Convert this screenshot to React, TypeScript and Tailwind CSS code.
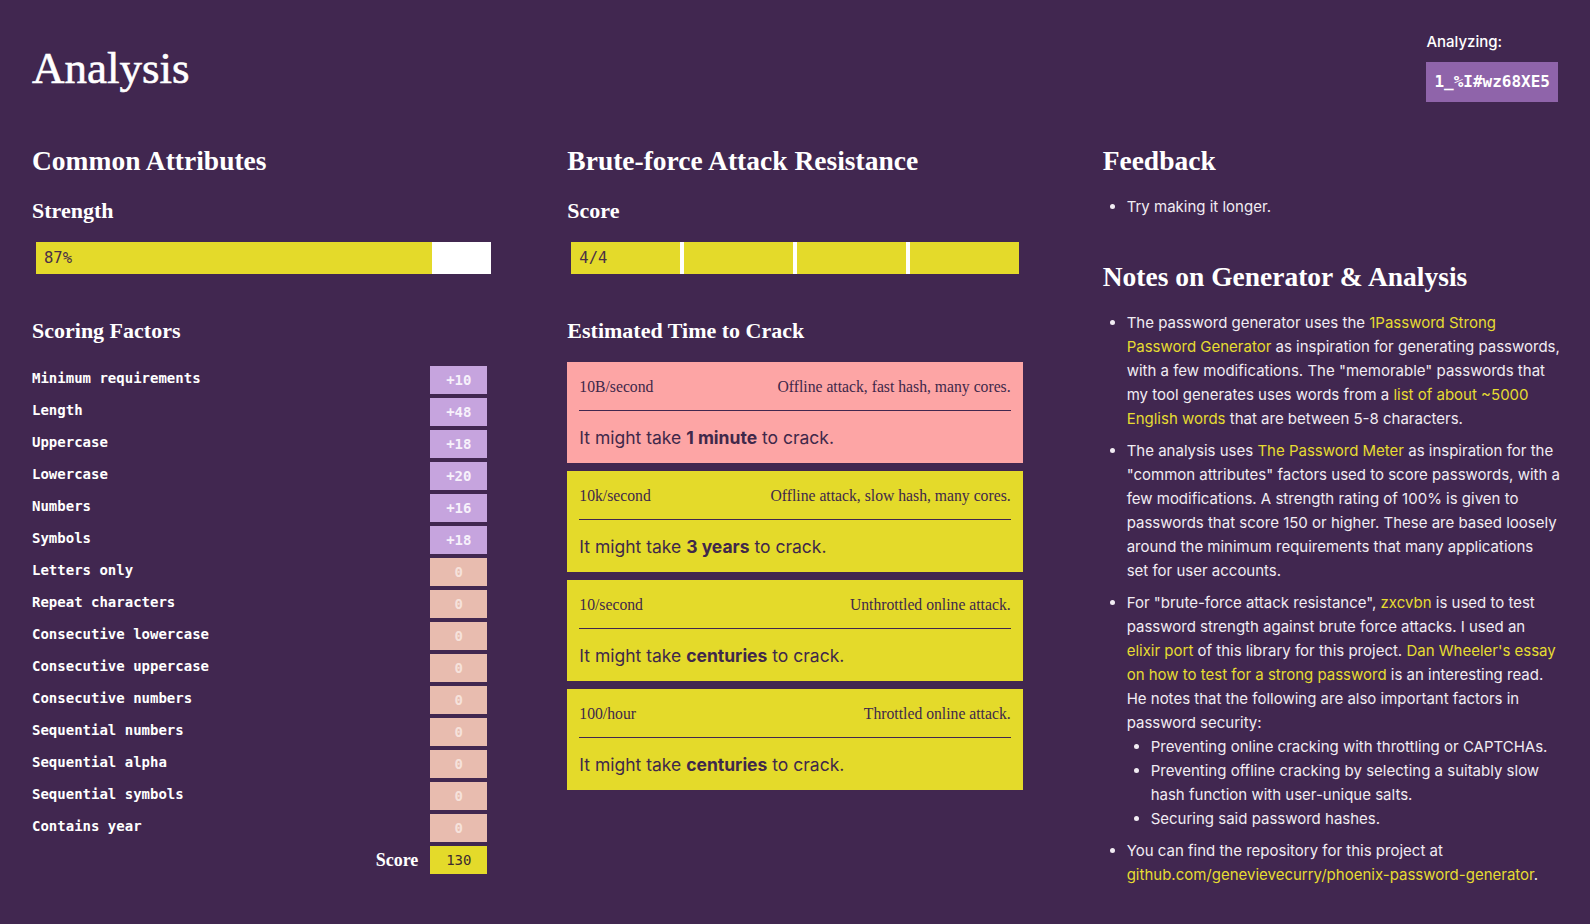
import React from "react";

const factors: [string, string][] = [
  ["Minimum requirements", "+10"],
  ["Length", "+48"],
  ["Uppercase", "+18"],
  ["Lowercase", "+20"],
  ["Numbers", "+16"],
  ["Symbols", "+18"],
  ["Letters only", "0"],
  ["Repeat characters", "0"],
  ["Consecutive lowercase", "0"],
  ["Consecutive uppercase", "0"],
  ["Consecutive numbers", "0"],
  ["Sequential numbers", "0"],
  ["Sequential alpha", "0"],
  ["Sequential symbols", "0"],
  ["Contains year", "0"],
];

const cards = [
  { rate: "10B/second", desc: "Offline attack, fast hash, many cores.", time: "1 minute", pink: true },
  { rate: "10k/second", desc: "Offline attack, slow hash, many cores.", time: "3 years", pink: false },
  { rate: "10/second", desc: "Unthrottled online attack.", time: "centuries", pink: false },
  { rate: "100/hour", desc: "Throttled online attack.", time: "centuries", pink: false },
];

function A({ children }: { children: React.ReactNode }) {
  return <a className="text-[#e6dc32]">{children}</a>;
}

export default function App() {
  return (
    <div className="min-h-screen bg-[#412750] px-8 pt-8 pb-8 text-white">
      {/* Header */}
      <div className="flex items-start justify-between">
        <h1 className="mt-[10px] font-['Liberation_Serif',serif] text-[45px] leading-[52px] text-white [-webkit-text-stroke:0.6px_white]">
          Analysis
        </h1>
        <div className="flex flex-col items-start">
          <div className="font-['Inter',sans-serif] text-[15px] font-medium leading-5 text-white">
            Analyzing:
          </div>
          <div className="mt-[10px] flex h-10 items-center bg-[#8f64aa] px-2 font-['DejaVu_Sans_Mono',monospace] text-[16px] font-bold text-white">
            1_%I#wz68XE5
          </div>
        </div>
      </div>

      {/* Columns */}
      <div className="mt-[41px] grid grid-cols-3 gap-x-20">
        {/* Column 1 */}
        <div>
          <h2 className="font-['Liberation_Serif',serif] text-[27.5px] font-bold leading-9">
            Common Attributes
          </h2>
          <h3 className="mt-[17px] font-['Liberation_Serif',serif] text-[22px] font-bold leading-[30px]">
            Strength
          </h3>
          <div className="mt-4 ml-1 -mr-1 flex h-8 bg-white">
            <div className="flex h-full w-[87%] items-center bg-[#e4da2a] pl-2 pt-0.5 font-['DejaVu_Sans_Mono',monospace] text-[15.5px] text-[#4a3046]">
              87%
            </div>
          </div>
          <h3 className="mt-[42px] font-['Liberation_Serif',serif] text-[22px] font-bold leading-[30px]">
            Scoring Factors
          </h3>
          <div className="mt-5 flex flex-col gap-1">
            {factors.map(([label, val]) => {
              const pos = val !== "0";
              return (
                <div key={label} className="flex h-7 items-center justify-between">
                  <span className="pb-[3px] font-['DejaVu_Sans_Mono',monospace] text-[14px] font-bold text-white">
                    {label}
                  </span>
                  <span
                    className={
                      pos
                        ? "flex h-7 w-[57px] items-center justify-center bg-[#c6a4de] font-['DejaVu_Sans_Mono',monospace] text-[14px] font-bold text-[#f7f1fb]"
                        : "flex h-7 w-[57px] items-center justify-center bg-[#e8bcaf] font-['DejaVu_Sans_Mono',monospace] text-[14px] font-bold text-[#f6e2db]"
                    }
                  >
                    {val}
                  </span>
                </div>
              );
            })}
            <div className="flex h-7 items-center justify-end gap-3">
              <span className="font-['Liberation_Serif',serif] text-[18px] font-bold text-white">Score</span>
              <span className="flex h-7 w-[57px] items-center justify-center bg-[#e4da2a] font-['DejaVu_Sans_Mono',monospace] text-[14px] text-[#3d2a30]">
                130
              </span>
            </div>
          </div>
        </div>

        {/* Column 2 */}
        <div>
          <h2 className="font-['Liberation_Serif',serif] text-[27.5px] font-bold leading-9">
            Brute-force Attack Resistance
          </h2>
          <h3 className="mt-[17px] font-['Liberation_Serif',serif] text-[22px] font-bold leading-[30px]">
            Score
          </h3>
          <div className="mt-4 ml-1 mr-1 grid h-8 grid-cols-4 gap-1 bg-white">
            <div className="flex items-center bg-[#e4da2a] pl-2 pt-0.5 font-['DejaVu_Sans_Mono',monospace] text-[15.5px] text-[#4a3046]">
              4/4
            </div>
            <div className="bg-[#e4da2a]" />
            <div className="bg-[#e4da2a]" />
            <div className="bg-[#e4da2a]" />
          </div>
          <h3 className="mt-[42px] font-['Liberation_Serif',serif] text-[22px] font-bold leading-[30px]">
            Estimated Time to Crack
          </h3>
          <div className="mt-4 flex flex-col gap-2">
            {cards.map((c) => (
              <div
                key={c.rate}
                className={
                  c.pink
                    ? "bg-[#fda5a5] px-3 pt-[14px] pb-[11px] text-[#40284a]"
                    : "bg-[#e4da2a] px-3 pt-[14px] pb-[11px] text-[#40284a]"
                }
              >
                <div className="flex justify-between font-['Liberation_Serif',serif] text-[15.7px] leading-[22px]">
                  <span>{c.rate}</span>
                  <span>{c.desc}</span>
                </div>
                <div className="mt-3 h-px bg-[#41274f]" />
                <p className="mt-[13px] font-['Inter',sans-serif] text-[17.5px] leading-7">
                  It might take <b className="font-bold">{c.time}</b> to crack.
                </p>
              </div>
            ))}
          </div>
        </div>

        {/* Column 3 */}
        <div className="font-['Inter',sans-serif] text-[15px] leading-6 text-[#f1ecf3]">
          <h2 className="font-['Liberation_Serif',serif] text-[27.5px] font-bold leading-9 text-white">
            Feedback
          </h2>
          <ul className="mt-4 list-disc pl-6">
            <li>Try making it longer.</li>
          </ul>
          <h2 className="mt-10 font-['Liberation_Serif',serif] text-[27.5px] font-bold leading-9 text-white">
            Notes on Generator &amp; Analysis
          </h2>
          <ul className="mt-4 list-disc space-y-2 whitespace-nowrap pl-6">
            <li>
              The password generator uses the <A>1Password Strong</A>
              <br />
              <A>Password Generator</A> as inspiration for generating passwords,
              <br />
              with a few modifications. The "memorable" passwords that
              <br />
              my tool generates uses words from a <A>list of about ~5000</A>
              <br />
              <A>English words</A> that are between 5-8 characters.
            </li>
            <li>
              The analysis uses <A>The Password Meter</A> as inspiration for the
              <br />
              "common attributes" factors used to score passwords, with a
              <br />
              few modifications. A strength rating of 100% is given to
              <br />
              passwords that score 150 or higher. These are based loosely
              <br />
              around the minimum requirements that many applications
              <br />
              set for user accounts.
            </li>
            <li>
              For "brute-force attack resistance", <A>zxcvbn</A> is used to test
              <br />
              password strength against brute force attacks. I used an
              <br />
              <A>elixir port</A> of this library for this project. <A>Dan Wheeler's essay</A>
              <br />
              <A>on how to test for a strong password</A> is an interesting read.
              <br />
              He notes that the following are also important factors in
              <br />
              password security:
              <ul className="list-disc pl-6">
                <li>Preventing online cracking with throttling or CAPTCHAs.</li>
                <li>
                  Preventing offline cracking by selecting a suitably slow
                  <br />
                  hash function with user-unique salts.
                </li>
                <li>Securing said password hashes.</li>
              </ul>
            </li>
            <li>
              You can find the repository for this project at
              <br />
              <A>github.com/genevievecurry/phoenix-password-generator</A>.
            </li>
          </ul>
        </div>
      </div>
    </div>
  );
}
